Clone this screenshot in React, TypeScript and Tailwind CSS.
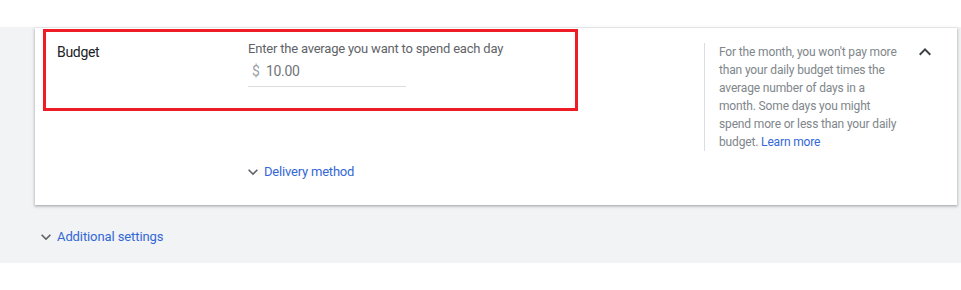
import React from "react";

const ExpandMore = ({ className }: { className?: string }) => (
  <svg viewBox="0 0 24 24" className={className} fill="currentColor">
    <path d="M16.59 8.59L12 13.17 7.41 8.59 6 10l6 6 6-6z" />
  </svg>
);

const ExpandLess = ({ className }: { className?: string }) => (
  <svg viewBox="0 0 24 24" className={className} fill="currentColor">
    <path d="M12 8l-6 6 1.41 1.41L12 10.83l4.59 4.58L18 14z" />
  </svg>
);

export default function App() {
  return (
    <div
      className="w-[961px] h-[290px] bg-white overflow-hidden"
      style={{ fontFamily: "Roboto, 'Liberation Sans', sans-serif" }}
    >
      <div className="h-[27px]" />
      <div className="bg-[#f1f3f4] pt-[1px] pl-[35px] pr-[4px] pb-[16px]">
        <div className="relative bg-white flex pt-[11px] pb-[23px] shadow-[0_1px_2px_0_rgba(60,64,67,0.3),0_1px_3px_1px_rgba(60,64,67,0.15)]">
          <div className="w-[213px] pl-[22px] pt-[3px] text-[14px] leading-[20px] tracking-[-0.3px] text-[#202124]">
            Budget
          </div>
          <div className="w-[456px] flex flex-col">
            <div className="text-[13px] leading-[20px] tracking-[-0.2px] text-[#5f6368]">
              Enter the average you want to spend each day
            </div>
            <div className="mt-[1px] h-[27px] w-[158px] pt-[1px] pl-[4px] border-b border-[#dadce0] text-[14px] leading-[20px] flex items-start self-start">
              <span className="text-[#9aa0a6] mr-[6px]">$</span>
              <span className="text-[#70757a] tracking-[-0.3px]">10.00</span>
            </div>
            <div className="mt-[75px] flex items-center ml-[-5px] text-[13px] leading-[20px] tracking-[-0.2px] text-[#3367d6]">
              <ExpandMore className="w-5 h-5 text-[#5f6368]" />
              <span className="ml-[1px]">Delivery method</span>
            </div>
          </div>
          <div className="mt-[4px] self-start w-[209px] border-l border-[#dadce0] pl-[14px] text-[12px] leading-[18px] tracking-[-0.15px] text-[#80868b]">
            For the month, you won't pay more
            <br />
            than your daily budget times the
            <br />
            average number of days in a
            <br />
            month. Some days you might
            <br />
            spend more or less than your daily
            <br />
            budget. <span className="text-[#3367d6]">Learn more</span>
          </div>
          <ExpandLess className="w-6 h-6 mt-[1px] text-[#3c4043]" />
          <div className="absolute left-[8px] top-[1px] w-[535px] h-[82px] border-[3px] border-[#ee1c25] pointer-events-none" />
        </div>
        <div className="mt-[22px] flex items-center text-[13px] leading-[20px] tracking-[-0.1px] text-[#3367d6]">
          <ExpandMore className="w-5 h-5 ml-[1px] text-[#5f6368]" />
          <span className="ml-[1px]">Additional settings</span>
        </div>
      </div>
    </div>
  );
}
